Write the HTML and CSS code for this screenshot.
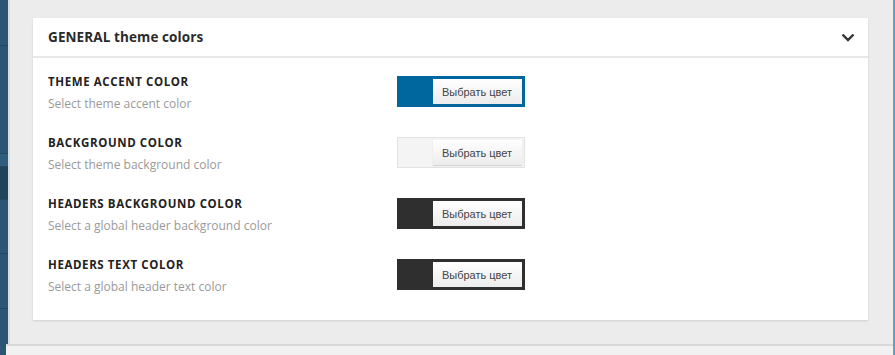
FILE: index.html
```html
<!DOCTYPE html>
<html>
<head>
<meta charset="utf-8">
<link rel="stylesheet" href="styles.css">
</head>
<body>
<div class="shell">
  <div class="sidebar">
    <div class="sb sb1"></div>
    <div class="sb sb2"></div>
    <div class="sb sb3"></div>
    <div class="sb sb4"></div>
    <div class="sb sb5"></div>
    <div class="sb sb6"></div>
  </div>
  <div class="sep"></div>
  <div class="main">
    <div class="content">
      <div class="card">
        <div class="card-head">
          <h2 class="card-title">GENERAL theme colors</h2>
          <svg class="chev" width="14" height="9" viewBox="0 0 14 9"><path d="M1.5 1.5 L7 7 L12.5 1.5" fill="none" stroke="#333" stroke-width="2.4"/></svg>
        </div>
        <div class="card-body">
          <div class="row">
            <div class="info">
              <div class="label">THEME ACCENT COLOR</div>
              <div class="desc">Select theme accent color</div>
            </div>
            <div class="picker accent"><span class="swatch"></span><span class="pick-btn">Выбрать цвет</span></div>
          </div>
          <div class="row">
            <div class="info">
              <div class="label">BACKGROUND COLOR</div>
              <div class="desc">Select theme background color</div>
            </div>
            <div class="picker light"><span class="swatch"></span><span class="pick-btn">Выбрать цвет</span></div>
          </div>
          <div class="row">
            <div class="info">
              <div class="label">HEADERS BACKGROUND COLOR</div>
              <div class="desc">Select a global header background color</div>
            </div>
            <div class="picker dark"><span class="swatch"></span><span class="pick-btn">Выбрать цвет</span></div>
          </div>
          <div class="row">
            <div class="info">
              <div class="label">HEADERS TEXT COLOR</div>
              <div class="desc">Select a global header text color</div>
            </div>
            <div class="picker dark"><span class="swatch"></span><span class="pick-btn">Выбрать цвет</span></div>
          </div>
        </div>
      </div>
    </div>
    <div class="footer"></div>
  </div>
  <div class="rightbar"></div>
</div>
</body>
</html>
```
FILE: styles.css
```css
html, body {
  margin: 0;
  padding: 0;
  width: 895px;
  height: 355px;
  overflow: hidden;
  background: #ececec;
}
.shell {
  display: flex;
  height: 355px;
}
.sidebar {
  width: 8px;
  background: #2a5573;
  display: flex;
  flex-direction: column;
}
.sb { border-bottom: 1px solid #23495f; }
.sb1 { height: 45px; }
.sb2 { height: 107px; }
.sb3 { height: 12px; background: #2f5e7c; }
.sb4 { height: 32px; background: #22445a; }
.sb5 { height: 53px; }
.sb6 { height: 54px; }
.sep {
  width: 2px;
  background: #dcdcdc;
}
.main {
  flex: 1;
  display: flex;
  flex-direction: column;
}
.content {
  flex: none;
  height: 344px;
  padding: 18px 25px 0 23px;
  box-sizing: border-box;
}
.footer {
  flex: 1;
  border-top: 2px solid #d8d8d8;
  background: #f1f1f1;
  margin-left: -4px;
}
.rightbar {
  width: 2px;
  background: #5ba3cf;
}
.card {
  background: #fff;
  height: 302px;
  box-shadow: 0 1px 2px rgba(0,0,0,0.12);
}
.card-head {
  height: 38px;
  border-bottom: 2px solid #e8e8e8;
  display: flex;
  align-items: center;
  justify-content: space-between;
  padding: 0 13px 0 15px;
}
.card-title {
  margin: 0;
  font-family: "Open Sans", sans-serif;
  font-weight: 700;
  font-size: 13.5px;
  color: #2b2b2b;
  letter-spacing: 0.1px;
}
.chev { display: block; margin-top: 1px; }
.card-body {
  padding: 16px 0 0 15px;
}
.row {
  display: flex;
  align-items: flex-start;
  height: 61px;
}
.info { width: 349px; }
.label {
  font-family: "Open Sans", sans-serif;
  font-weight: 700;
  font-size: 11.5px;
  color: #222;
  line-height: 16px;
  letter-spacing: 0.6px;
}
.desc {
  font-family: "Open Sans", sans-serif;
  font-size: 12px;
  color: #9a9a9a;
  line-height: 16px;
  margin-top: 6px;
}
.picker {
  margin-top: 2px;
  width: 128px;
  height: 31px;
  box-sizing: border-box;
  display: flex;
  padding: 3px 3px 3px 0;
}
.swatch { width: 36px; }
.pick-btn {
  flex: 1;
  background: linear-gradient(#ffffff, #ececec);
  font-family: "Liberation Sans", Arial, sans-serif;
  font-size: 11px;
  color: #444;
  display: flex;
  align-items: center;
  justify-content: center;
  padding-right: 1px;
}
.accent { background: #00669e; }
.dark { background: #2f2f2f; }
.light {
  background: #f4f4f4;
  border: 1px solid #e2e2e2;
  padding: 2px 2px 2px 0;
}
.light .swatch { width: 35px; }
.light .pick-btn { box-shadow: 0 1px 1px rgba(0,0,0,0.12); }
```
